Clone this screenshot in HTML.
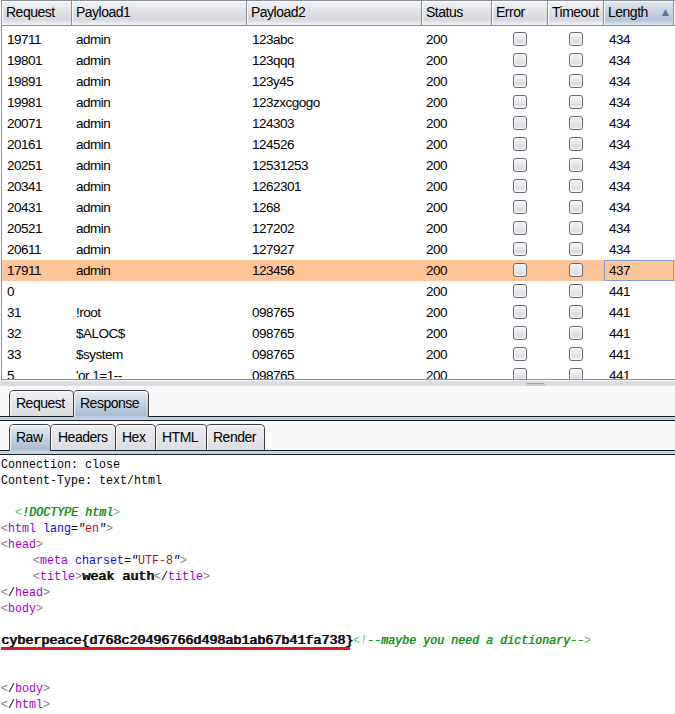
<!DOCTYPE html><html><head><meta charset="utf-8"><style>html,body{margin:0;padding:0;}
body{width:675px;height:714px;overflow:hidden;position:relative;background:#fafafa;font-family:"Liberation Sans",sans-serif;}
#tbl{position:absolute;left:0;top:0;width:675px;height:380px;background:#fff;overflow:hidden;}
#tbl:before{content:"";position:absolute;left:1px;top:0;width:1px;height:380px;background:#8f949c;z-index:5}
#tbl:after{content:"";position:absolute;left:1px;top:379px;width:674px;height:1px;background:#8f949c;z-index:5}
.hdrbg{position:absolute;left:1px;top:0;width:674px;height:26px;background:#8c8f97;}
.hc{position:absolute;top:1px;height:24px;box-sizing:border-box;border-left:1px solid #fbfbfc;border-right:1px solid #8a8e96;
 background:linear-gradient(#fcfcfd 0px,#fcfcfd 1px,#f0f1f4 1px,#e3e4e8 9px,#d7d9de 18px,#dcdee3 20px,#e6e8ed 22px,#f2f3f7 23px,#f2f3f7 24px);}
.hc span{position:absolute;left:3px;top:-1px;font-size:14px;letter-spacing:-0.5px;line-height:24px;color:#000;white-space:nowrap}
.hc.sel{background:linear-gradient(#f3f6f9 0px,#f3f6f9 1px,#dfe6ed 1px,#cbd6e1 9px,#b6c6d6 18px,#bccbdb 20px,#c9d7e5 22px,#d9e5ef 23px,#d9e5ef 24px);}
.sortarrow{position:absolute;left:662px;top:9px;z-index:6}
.row{position:absolute;left:2px;width:673px;height:21px;}
.row.hl{background:#ffc599;}
.cell{position:absolute;top:0px;font-size:13.5px;letter-spacing:-0.5px;line-height:21px;white-space:pre;color:#000;margin-left:-2px}
.cb{position:absolute;top:3px;width:14px;height:14px;box-sizing:border-box;border:1px solid #676b74;border-radius:3px;margin-left:-2px;
 background:linear-gradient(#f7f7f9,#e2e4e8 55%,#dcdee4 70%,#eceef3);box-shadow:inset 0 0 0 1px rgba(255,255,255,.6)}
.focus{position:absolute;left:602px;top:0;width:70px;height:21px;box-sizing:border-box;border:1px solid #7b9fd0;}
.split{position:absolute;left:0;top:380px;width:675px;height:6px;background:linear-gradient(#f4f4f6 0px,#f4f4f6 1px,#e6e7eb 1px,#dcdde2 2px,#d9dbe0 5px,#e4e5e9 6px);}
.handle{position:absolute;left:526px;top:383px;width:19px;height:3px;box-sizing:border-box;border-top:1px solid #9fa2aa;border-radius:2px 2px 0 0;background:#c9cbd3;}
.tabline{position:absolute;left:0;width:675px;height:1px;background:#1b1e26;}
.band{position:absolute;left:0;width:675px;height:3px;background:#bfd2e5;}
.tab{position:absolute;height:26px;box-sizing:border-box;border:1px solid #3d4049;border-bottom:none;border-radius:5px 5px 0 0;
 background:linear-gradient(#f6f6f8 0px,#ececef 3px,#dcdde2 25px);}
.tab:before{content:"";position:absolute;left:0;top:0;right:0;bottom:0;border-top:1px solid #fff;border-left:1px solid #fff;border-radius:4px 4px 0 0;opacity:.8}
.tab span{position:absolute;left:6px;top:0;font-size:14px;letter-spacing:-0.5px;line-height:24px;color:#000;white-space:nowrap}
.selt{background:linear-gradient(#f0f4f8 0px,#dfe7ef 3px,#a9bcd0 24px,#bfd2e5 27px);z-index:2}
#resp{position:absolute;left:0;top:455px;width:675px;height:259px;background:#fff;}
.m{position:absolute;font-family:"Liberation Mono",monospace;font-size:13px;line-height:16px;white-space:pre;transform-origin:0 0;transform:scaleX(0.8974);z-index:3}
.m.b{margin-top:-1px;font-size:12px;transform:scaleX(1.111) scaleY(1.1);text-shadow:0.8px 0 0 currentColor}
.m.it{font-style:italic}
.redline{position:absolute;left:1px;top:647px;width:349px;height:3px;background:#e8141c;z-index:3}
</style></head><body>
<div id="tbl">
<div class="hdrbg"></div>
<div class="hc" style="left:2px;width:70px"><span>Request</span></div>
<div class="hc" style="left:72px;width:175px"><span>Payload1</span></div>
<div class="hc" style="left:247px;width:175px"><span>Payload2</span></div>
<div class="hc" style="left:422px;width:70px"><span>Status</span></div>
<div class="hc" style="left:492px;width:56px"><span>Error</span></div>
<div class="hc" style="left:548px;width:56px"><span>Timeout</span></div>
<div class="hc sel" style="left:604px;width:70px"><span>Length</span></div>
<div class="hc" style="left:674px;width:10px"></div>
<svg class="sortarrow" width="8" height="8" viewBox="0 0 8 8"><polygon points="0,7 7,7 3.5,0.3" fill="#4b78a9"/></svg>
<div class="row" style="top:29px">
<span class="cell" style="left:7px">19711</span>
<span class="cell" style="left:76px">admin</span>
<span class="cell" style="left:252px">123abc</span>
<span class="cell" style="left:426px">200</span>
<span class="cb" style="left:513px"></span><span class="cb" style="left:569px"></span>
<span class="cell" style="left:609px">434</span>
</div>
<div class="row" style="top:50px">
<span class="cell" style="left:7px">19801</span>
<span class="cell" style="left:76px">admin</span>
<span class="cell" style="left:252px">123qqq</span>
<span class="cell" style="left:426px">200</span>
<span class="cb" style="left:513px"></span><span class="cb" style="left:569px"></span>
<span class="cell" style="left:609px">434</span>
</div>
<div class="row" style="top:71px">
<span class="cell" style="left:7px">19891</span>
<span class="cell" style="left:76px">admin</span>
<span class="cell" style="left:252px">123y45</span>
<span class="cell" style="left:426px">200</span>
<span class="cb" style="left:513px"></span><span class="cb" style="left:569px"></span>
<span class="cell" style="left:609px">434</span>
</div>
<div class="row" style="top:92px">
<span class="cell" style="left:7px">19981</span>
<span class="cell" style="left:76px">admin</span>
<span class="cell" style="left:252px">123zxcgogo</span>
<span class="cell" style="left:426px">200</span>
<span class="cb" style="left:513px"></span><span class="cb" style="left:569px"></span>
<span class="cell" style="left:609px">434</span>
</div>
<div class="row" style="top:113px">
<span class="cell" style="left:7px">20071</span>
<span class="cell" style="left:76px">admin</span>
<span class="cell" style="left:252px">124303</span>
<span class="cell" style="left:426px">200</span>
<span class="cb" style="left:513px"></span><span class="cb" style="left:569px"></span>
<span class="cell" style="left:609px">434</span>
</div>
<div class="row" style="top:134px">
<span class="cell" style="left:7px">20161</span>
<span class="cell" style="left:76px">admin</span>
<span class="cell" style="left:252px">124526</span>
<span class="cell" style="left:426px">200</span>
<span class="cb" style="left:513px"></span><span class="cb" style="left:569px"></span>
<span class="cell" style="left:609px">434</span>
</div>
<div class="row" style="top:155px">
<span class="cell" style="left:7px">20251</span>
<span class="cell" style="left:76px">admin</span>
<span class="cell" style="left:252px">12531253</span>
<span class="cell" style="left:426px">200</span>
<span class="cb" style="left:513px"></span><span class="cb" style="left:569px"></span>
<span class="cell" style="left:609px">434</span>
</div>
<div class="row" style="top:176px">
<span class="cell" style="left:7px">20341</span>
<span class="cell" style="left:76px">admin</span>
<span class="cell" style="left:252px">1262301</span>
<span class="cell" style="left:426px">200</span>
<span class="cb" style="left:513px"></span><span class="cb" style="left:569px"></span>
<span class="cell" style="left:609px">434</span>
</div>
<div class="row" style="top:197px">
<span class="cell" style="left:7px">20431</span>
<span class="cell" style="left:76px">admin</span>
<span class="cell" style="left:252px">1268</span>
<span class="cell" style="left:426px">200</span>
<span class="cb" style="left:513px"></span><span class="cb" style="left:569px"></span>
<span class="cell" style="left:609px">434</span>
</div>
<div class="row" style="top:218px">
<span class="cell" style="left:7px">20521</span>
<span class="cell" style="left:76px">admin</span>
<span class="cell" style="left:252px">127202</span>
<span class="cell" style="left:426px">200</span>
<span class="cb" style="left:513px"></span><span class="cb" style="left:569px"></span>
<span class="cell" style="left:609px">434</span>
</div>
<div class="row" style="top:239px">
<span class="cell" style="left:7px">20611</span>
<span class="cell" style="left:76px">admin</span>
<span class="cell" style="left:252px">127927</span>
<span class="cell" style="left:426px">200</span>
<span class="cb" style="left:513px"></span><span class="cb" style="left:569px"></span>
<span class="cell" style="left:609px">434</span>
</div>
<div class="row hl" style="top:260px">
<span class="cell" style="left:7px">17911</span>
<span class="cell" style="left:76px">admin</span>
<span class="cell" style="left:252px">123456</span>
<span class="cell" style="left:426px">200</span>
<span class="cb" style="left:513px"></span><span class="cb" style="left:569px"></span>
<span class="cell" style="left:609px">437</span>
<span class="focus"></span>
</div>
<div class="row" style="top:281px">
<span class="cell" style="left:7px">0</span>
<span class="cell" style="left:426px">200</span>
<span class="cb" style="left:513px"></span><span class="cb" style="left:569px"></span>
<span class="cell" style="left:609px">441</span>
</div>
<div class="row" style="top:302px">
<span class="cell" style="left:7px">31</span>
<span class="cell" style="left:76px">!root</span>
<span class="cell" style="left:252px">098765</span>
<span class="cell" style="left:426px">200</span>
<span class="cb" style="left:513px"></span><span class="cb" style="left:569px"></span>
<span class="cell" style="left:609px">441</span>
</div>
<div class="row" style="top:323px">
<span class="cell" style="left:7px">32</span>
<span class="cell" style="left:76px">$ALOC$</span>
<span class="cell" style="left:252px">098765</span>
<span class="cell" style="left:426px">200</span>
<span class="cb" style="left:513px"></span><span class="cb" style="left:569px"></span>
<span class="cell" style="left:609px">441</span>
</div>
<div class="row" style="top:344px">
<span class="cell" style="left:7px">33</span>
<span class="cell" style="left:76px">$system</span>
<span class="cell" style="left:252px">098765</span>
<span class="cell" style="left:426px">200</span>
<span class="cb" style="left:513px"></span><span class="cb" style="left:569px"></span>
<span class="cell" style="left:609px">441</span>
</div>
<div class="row" style="top:365px">
<span class="cell" style="left:7px">5</span>
<span class="cell" style="left:76px">&#x27;or 1=1--</span>
<span class="cell" style="left:252px">098765</span>
<span class="cell" style="left:426px">200</span>
<span class="cb" style="left:513px"></span><span class="cb" style="left:569px"></span>
<span class="cell" style="left:609px">441</span>
</div>
</div>
<div class="split"></div>
<div class="handle"></div>
<div class="tabline" style="top:416px"></div>
<div class="band" style="top:417px"></div>
<div class="tabline" style="top:420px"></div>
<div class="tab" style="left:9px;top:390px;width:65px"><span>Request</span></div>
<div class="tab selt" style="left:73px;top:390px;width:76px;height:27px"><span>Response</span></div>
<div class="tabline" style="top:450px"></div>
<div class="band" style="top:451px"></div>
<div class="tabline" style="top:454px"></div>
<div class="tab" style="left:50px;top:424px;width:66px"><span style="left:7px">Headers</span></div>
<div class="tab" style="left:115px;top:424px;width:41px"><span>Hex</span></div>
<div class="tab" style="left:155px;top:424px;width:52px"><span>HTML</span></div>
<div class="tab" style="left:206px;top:424px;width:59px"><span>Render</span></div>
<div class="tab selt" style="left:9px;top:424px;width:42px;height:27px"><span>Raw</span></div>
<div id="resp"></div>

<span class="m" style="left:1px;top:457px;color:#000">Connection: close</span>
<span class="m" style="left:1px;top:473px;color:#000">Content-Type: text/html</span>
<span class="m" style="left:15px;top:505px;color:#5cbf5c">&lt;</span>
<span class="m it" style="left:22px;top:505px;color:#149614;text-shadow:0.5px 0 0 #149614">!DOCTYPE html</span>
<span class="m" style="left:113px;top:505px;color:#5cbf5c">&gt;</span>
<span class="m" style="left:1px;top:521px;color:#7c7c7c">&lt;</span>
<span class="m" style="left:8px;top:521px;color:#a500c8">html</span>
<span class="m" style="left:36px;top:521px;color:#0814c8"> lang</span>
<span class="m" style="left:71px;top:521px;color:#000">=</span>
<span class="m it" style="left:78px;top:521px;color:#000">&quot;</span>
<span class="m" style="left:85px;top:521px;color:#a81414">en</span>
<span class="m it" style="left:99px;top:521px;color:#000">&quot;</span>
<span class="m" style="left:106px;top:521px;color:#7c7c7c">&gt;</span>
<span class="m" style="left:1px;top:537px;color:#7c7c7c">&lt;</span>
<span class="m" style="left:8px;top:537px;color:#a500c8">head</span>
<span class="m" style="left:36px;top:537px;color:#7c7c7c">&gt;</span>
<span class="m" style="left:33px;top:553px;color:#7c7c7c">&lt;</span>
<span class="m" style="left:40px;top:553px;color:#a500c8">meta</span>
<span class="m" style="left:68px;top:553px;color:#0814c8"> charset</span>
<span class="m" style="left:124px;top:553px;color:#000">=</span>
<span class="m it" style="left:131px;top:553px;color:#000">&quot;</span>
<span class="m" style="left:138px;top:553px;color:#a81414">UTF-8</span>
<span class="m it" style="left:173px;top:553px;color:#000">&quot;</span>
<span class="m" style="left:180px;top:553px;color:#7c7c7c">&gt;</span>
<span class="m" style="left:33px;top:569px;color:#7c7c7c">&lt;</span>
<span class="m" style="left:40px;top:569px;color:#a500c8">title</span>
<span class="m" style="left:75px;top:569px;color:#7c7c7c">&gt;</span>
<span class="m b" style="left:82px;top:569px;color:#000">weak auth</span>
<span class="m" style="left:154px;top:569px;color:#7c7c7c">&lt;</span>
<span class="m" style="left:161px;top:569px;color:#000">/</span>
<span class="m" style="left:168px;top:569px;color:#a500c8">title</span>
<span class="m" style="left:203px;top:569px;color:#7c7c7c">&gt;</span>
<span class="m" style="left:1px;top:585px;color:#7c7c7c">&lt;</span>
<span class="m" style="left:8px;top:585px;color:#000">/</span>
<span class="m" style="left:15px;top:585px;color:#a500c8">head</span>
<span class="m" style="left:43px;top:585px;color:#7c7c7c">&gt;</span>
<span class="m" style="left:1px;top:601px;color:#7c7c7c">&lt;</span>
<span class="m" style="left:8px;top:601px;color:#a500c8">body</span>
<span class="m" style="left:36px;top:601px;color:#7c7c7c">&gt;</span>
<span class="m b" style="left:1px;top:633px;color:#000">cyberpeace{d768c20496766d498ab1ab67b41fa738}</span>
<span class="m" style="left:353px;top:633px;color:#5cbf5c">&lt;</span>
<span class="m it" style="left:360px;top:633px;color:#5cbf5c">!</span>
<span class="m it" style="left:367px;top:633px;color:#149614;text-shadow:0.5px 0 0 #149614">--maybe you need a dictionary--</span>
<span class="m" style="left:584px;top:633px;color:#5cbf5c">&gt;</span>
<span class="m" style="left:1px;top:681px;color:#7c7c7c">&lt;</span>
<span class="m" style="left:8px;top:681px;color:#000">/</span>
<span class="m" style="left:15px;top:681px;color:#a500c8">body</span>
<span class="m" style="left:43px;top:681px;color:#7c7c7c">&gt;</span>
<span class="m" style="left:1px;top:697px;color:#7c7c7c">&lt;</span>
<span class="m" style="left:8px;top:697px;color:#000">/</span>
<span class="m" style="left:15px;top:697px;color:#a500c8">html</span>
<span class="m" style="left:43px;top:697px;color:#7c7c7c">&gt;</span>
<div class="redline"></div>
</body></html>
